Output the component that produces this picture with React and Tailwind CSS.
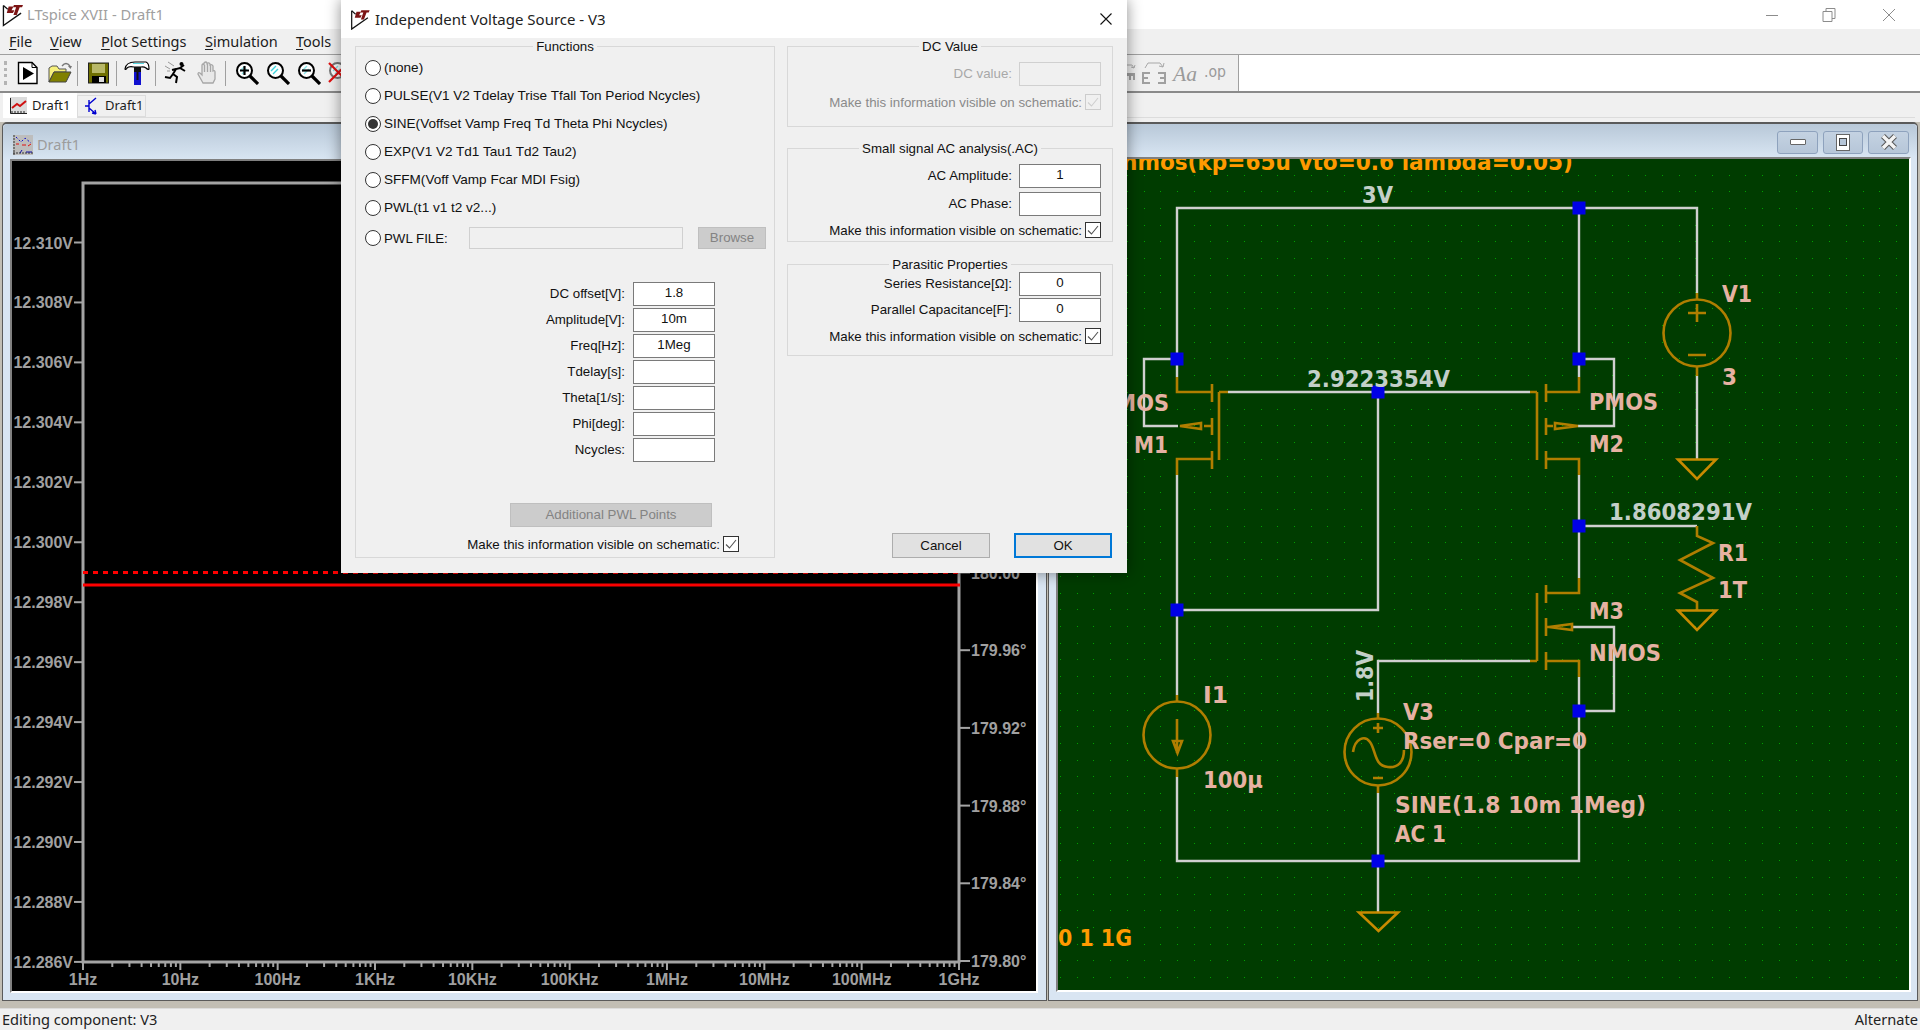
import React from "react";

const WIRE = "#d0d0d0";
const COMP = "#b07e00";
const GND = "#c88a00";
const SALMON = "#e6b2a2";
const GREYT = "#c3cfc8";
const ORANGE = "#ff9a00";

function Logo({ className }) {
  return (
    <svg viewBox="0 0 22 24" className={className}>
      <path d="M1.5 2 V23 L20 10" fill="none" stroke="#111" strokeWidth="1.4" />
      <path d="M1.5 2 L6 6" fill="none" stroke="#111" strokeWidth="1.2" />
      <path d="M7 3 H12 L10 7 H13 L11.5 10 H5 Z" fill="#7c1414" />
      <path d="M12.5 1.5 H22 L21 4 H18.5 L15.5 12 H12 L14.8 4 H11.5 Z" fill="#7c1414" />
    </svg>
  );
}

function NewIcon() {
  return (
    <svg viewBox="0 0 22 24" className="w-[22px] h-[24px]">
      <path d="M1.5 1.5 H15 L20 6.5 V22.5 H1.5 Z" fill="#fff" stroke="#000" strokeWidth="1.4" />
      <path d="M15 1.5 V6.5 H20" fill="none" stroke="#000" />
      <path d="M6 6 L17 12.5 L6 19 Z" fill="#000" />
    </svg>
  );
}
function OpenIcon() {
  return (
    <svg viewBox="0 0 24 24" className="w-[24px] h-[24px]">
      <path d="M14 5 Q18 0 22 5" fill="none" stroke="#777" strokeWidth="1.4" />
      <path d="M20 5 h4 l-1.5 3z" fill="#777" />
      <path d="M1 21 V7 L4 5 H9 L11 8 H18 V11 H6 L1 21 Z" fill="#f6f07c" stroke="#555" strokeWidth="1" />
      <path d="M1 21 L6 11 H23 L18 21 Z" fill="#808000" stroke="#444" strokeWidth="1" />
    </svg>
  );
}
function SaveIcon() {
  return (
    <svg viewBox="0 0 21 22" className="w-[21px] h-[22px]">
      <rect x="0.5" y="1" width="20" height="20" fill="#6f6f00" stroke="#222" />
      <rect x="4" y="2" width="13" height="9" fill="#b8b868" />
      <rect x="4" y="14" width="14" height="7" fill="#000" />
      <rect x="11" y="15" width="5" height="5" fill="#ddd" />
    </svg>
  );
}
function HammerIcon() {
  return (
    <svg viewBox="0 0 26 26" className="w-[26px] h-[26px]">
      <path d="M1 9 Q2 2 11 2 H22 Q25 3 25 9 Q24 10 22 8 Q20 6.5 17 7 H10 Q5 6 3 8 Q2 10 1 9 Z" fill="#fff" stroke="#000" strokeWidth="1.2" />
      <path d="M9 3.5 H20" stroke="#58d8e0" strokeWidth="1" />
      <rect x="10" y="7" width="7" height="5" fill="#111" />
      <rect x="10" y="12" width="7" height="13" fill="#1010d0" />
      <rect x="12.5" y="12" width="2" height="8" fill="#111" />
    </svg>
  );
}
function RunnerIcon() {
  return (
    <svg viewBox="0 0 24 24" className="w-[24px] h-[24px]">
      <circle cx="17.5" cy="3" r="2" fill="#000" />
      <path d="M21 10 L16 7 L12 8 L9 13 L13 16 L12 22 M9 13 L6 17 L1 16 M12 8 L8 9 M16 7 L20 4" fill="none" stroke="#000" strokeWidth="2" />
      <path d="M4 1 L10 5 M1 5 L6 8 M3 10 H6" fill="none" stroke="#999" strokeWidth="1" />
    </svg>
  );
}
function HandIcon() {
  return (
    <svg viewBox="0 0 20 24" className="w-[20px] h-[24px]">
      <path d="M6 22 L1 13 Q1 11 3 12 L5 14 V4 Q6 2 7 4 V2 Q9 0 10 2 V2.5 Q12 1 13 3 V4 Q15 3 16 5 V10 Q18 9 18 11 V18 L16 22 Z M7.5 4 V11 M10.5 3 V11 M13.5 4 V11" fill="#e8e8e8" stroke="#a6a6a6" strokeWidth="1.3" />
    </svg>
  );
}
function Magnifier({ sign, dim }) {
  return (
    <svg viewBox="0 0 24 24" className="w-[24px] h-[24px]">
      <circle cx="9.5" cy="9.5" r="7.5" fill="#fff" stroke={dim ? "#777" : "#000"} strokeWidth="2" />
      <path d="M5 10 L10 5 M7 13 L12 8" stroke="#3cd4dc" strokeWidth="1.4" opacity={sign === "none" ? 1 : 0.6} />
      <path d="M15 15 L23 23" stroke={dim ? "#777" : "#000"} strokeWidth="3.2" />
      {sign === "plus" && <path d="M5 9.5 H14 M9.5 5 V14" stroke="#000" strokeWidth="2.2" />}
      {sign === "minus" && <path d="M5 9.5 H14" stroke="#000" strokeWidth="2.2" />}
      {dim && <path d="M1 2 L20 21 M20 2 L1 21" stroke="#e01010" strokeWidth="2.2" />}
    </svg>
  );
}
function Sep() {
  return <div className="w-px h-[25px] bg-[#a0a0a0]" />;
}
function GreyIcons() {
  return (
    <svg viewBox="0 0 99 24" className="w-[99px] h-[24px]">
      <path d="M0 12 H8 V19 H6 V15 H4 V19 H2 V15 H0 Z" fill="#a0a0a0" />
      <path d="M0 4 H5 L7 7 M7 7 l-3 -1 M7 7 l1 -3" fill="none" stroke="#aaa" />
      <path d="M23 12 H16 V22 H23 M16 17 H21 M31 12 H38 V22 H31 M33 17 H38" fill="none" stroke="#a0a0a0" strokeWidth="2" />
      <path d="M18 7 L21 2 H33 L36 6 M36 6 l-4 -1 M36 6 l1 -4" fill="none" stroke="#a8a8a8" />
      <text x="46" y="20" fontSize="21" fontStyle="italic" fill="#9a9a9a" textLength="24" lengthAdjust="spacingAndGlyphs" fontFamily="'Liberation Serif', serif">Aa</text>
      <text x="77" y="16" fontSize="15" fill="#9a9a9a" textLength="22" lengthAdjust="spacingAndGlyphs" fontFamily="'DejaVu Sans', sans-serif">.op</text>
    </svg>
  );
}

function Toolbar() {
  return (
    <div className="flex h-[39px] shrink-0 border-t border-b-2 border-t-[#a0a0a0] border-b-[#8a8a8a]">
      <div className="w-[1239px] flex items-center bg-[#f0f0f0] border-r border-[#a0a0a0] pl-[4px]">
        <div className="w-[3px] h-[24px] border-l-[3px] border-dotted border-[#b4b4b4]" />
        <div className="ml-[10px]"><NewIcon /></div>
        <div className="ml-[9px]"><OpenIcon /></div>
        <div className="ml-[5px]"><Sep /></div>
        <div className="ml-[10px]"><SaveIcon /></div>
        <div className="ml-[7px]"><Sep /></div>
        <div className="ml-[7px]"><HammerIcon /></div>
        <div className="ml-[5px]"><Sep /></div>
        <div className="ml-[8px]"><RunnerIcon /></div>
        <div className="ml-[9px]"><HandIcon /></div>
        <div className="ml-[8px]"><Sep /></div>
        <div className="ml-[9px]"><Magnifier sign="plus" /></div>
        <div className="ml-[7px]"><Magnifier sign="none" /></div>
        <div className="ml-[7px]"><Magnifier sign="minus" /></div>
        <div className="ml-[7px]"><Magnifier dim /></div>
        <div className="ml-auto flex items-center pr-[12px]">
          <GreyIcons />
        </div>
      </div>
      <div className="flex-1 bg-white" />
    </div>
  );
}

function TitleBar() {
  return (
    <div className="flex items-center h-[29px] shrink-0 bg-white pl-[2px] font-['Noto_Sans',sans-serif] text-[14.7px] text-[#a0a0a0]">
      <Logo className="w-[21px] h-[24px]" />
      <span className="ml-[4px]">LTspice XVII - Draft1</span>
      <div className="ml-auto flex items-center text-[#8c8c8c]">
        <svg viewBox="0 0 150 16" className="w-[150px] h-[16px] mr-[5px]">
          <path d="M1 8.5 H13" stroke="#8c8c8c" strokeWidth="1" />
          <path d="M58 4.5 H67 V14.5 H58 Z M61 4 V1.5 H70 V11.5 H67" fill="none" stroke="#8c8c8c" />
          <path d="M118 2 L130 14 M130 2 L118 14" stroke="#8c8c8c" />
        </svg>
      </div>
    </div>
  );
}

function MenuItem({ first, rest, className }) {
  return (
    <span className={className}>
      <span className="underline underline-offset-2">{first}</span>
      {rest}
    </span>
  );
}

function MenuBar() {
  return (
    <div className="flex items-center h-[25px] shrink-0 bg-[#f0f0f0] pl-[9px] font-['Noto_Sans',sans-serif] text-[14.5px] text-[#1c1c1c]">
      <MenuItem first="F" rest="ile" className="w-[41px]" />
      <MenuItem first="V" rest="iew" className="w-[51px]" />
      <MenuItem first="P" rest="lot Settings" className="w-[104px]" />
      <MenuItem first="S" rest="imulation" className="w-[91px]" />
      <MenuItem first="T" rest="ools" />
    </div>
  );
}

function TraceIcon() {
  return (
    <svg viewBox="0 0 17 17" className="w-[17px] h-[17px]">
      <rect x="0" y="0" width="17" height="17" fill="#dcdcdc" />
      <path d="M0.5 1 V16.5 H17 M2 16 v-2 M5 16 v-2 M8 16 v-2 M11 16 v-2 M14 16 v-2" fill="none" stroke="#222" />
      <path d="M2 11 L7 7 L10 9 L16 4" fill="none" stroke="#d01010" strokeWidth="2" />
    </svg>
  );
}
function TransistorIcon() {
  return (
    <svg viewBox="0 0 12 18" className="w-[12px] h-[18px]">
      <path d="M0 9 H4 M4 3 V15 M4 7 L11 1 M4 11 L11 17 M11 17 L7 16 M11 17 L10 13" fill="none" stroke="#0000d0" strokeWidth="1.4" />
    </svg>
  );
}

function Tabs() {
  return (
    <div className="h-[29px] shrink-0 bg-[#f0f0f0] pl-[3px] pr-[5px] font-['Noto_Sans',sans-serif] text-[13px] text-[#1c1c1c]">
      <div className="flex h-[25px] border-b border-[#dcdcdc]">
        <div className="flex items-center w-[74px] h-[25px] bg-white pl-[7px]">
          <TraceIcon />
          <span className="ml-[5px]">Draft1</span>
        </div>
        <div className="flex items-center w-[69px] h-[22px] mt-[2px] border border-[#dcdcdc] pl-[7px]">
          <TransistorIcon />
          <span className="ml-[8px]">Draft1</span>
        </div>
      </div>
    </div>
  );
}

function PlotIcon() {
  return (
    <svg viewBox="0 0 20 20" className="w-[20px] h-[20px]">
      <rect width="20" height="20" fill="#bdbdbd" />
      <path d="M1 0 V20 M0 18 H20" stroke="#333" strokeDasharray="2 1" />
      <path d="M3 2 L8 7 L12 3 L18 8" fill="none" stroke="#1010d0" strokeDasharray="2 2" />
      <path d="M3 9 H6 M9 10 H13 M15 11 L18 9" fill="none" stroke="#e01010" />
      <path d="M7 18 L9 15 M13 17 H19" fill="none" stroke="#1010a0" />
    </svg>
  );
}

function Plot() {
  const left = [12.31, 12.308, 12.306, 12.304, 12.302, 12.3, 12.298, 12.296, 12.294, 12.292, 12.29, 12.288, 12.286];
  const right = ["180.00°", "179.96°", "179.92°", "179.88°", "179.84°", "179.80°"];
  const bottom = ["1Hz", "10Hz", "100Hz", "1KHz", "10KHz", "100KHz", "1MHz", "10MHz", "100MHz", "1GHz"];
  const dx = (959 - 83) / 9;
  const minor = [];
  for (let d = 0; d < 9; d++) {
    for (let k = 2; k < 10; k++) {
      minor.push(83 + dx * (d + Math.log10(k)));
    }
  }
  return (
    <svg viewBox="12 161 1024 830" className="block w-[1024px] h-[830px] bg-black font-['Liberation_Sans',sans-serif]">
      <path d="M83 962 V183 H959 V962 Z" fill="none" stroke="#a4a4a4" strokeWidth="3" />
      <path d="M83 572.5 H960" stroke="#ff0000" strokeWidth="3" strokeDasharray="5 5" />
      <path d="M83 585 H960" stroke="#ff0000" strokeWidth="3" />
      {left.map((v, i) => {
        const y = 242.5 + i * 59.95;
        return (
          <g key={v}>
            <path d={`M74 ${y} H83`} stroke="#a4a4a4" strokeWidth="2" />
            <text x="73" y={y + 6} textAnchor="end" fontSize="16" fontWeight="700" fill="#a0a0a0">{v.toFixed(3)}V</text>
          </g>
        );
      })}
      {right.map((v, i) => {
        const y = 572.5 + i * 77.7;
        return (
          <g key={v}>
            <path d={`M959 ${y} H970`} stroke="#a4a4a4" strokeWidth="2" />
            <text x="971" y={y + 6} fontSize="16" fontWeight="700" fill="#a0a0a0">{v}</text>
          </g>
        );
      })}
      {bottom.map((v, i) => {
        const x = 83 + i * dx;
        return (
          <g key={v}>
            <path d={`M${x} 962 V970`} stroke="#a4a4a4" strokeWidth="2" />
            <text x={x} y="985" textAnchor="middle" fontSize="16" fontWeight="700" fill="#a0a0a0">{v}</text>
          </g>
        );
      })}
      {minor.map((x, i) => (
        <path key={i} d={`M${x} 962 V967`} stroke="#a4a4a4" strokeWidth="2" />
      ))}
    </svg>
  );
}

function Junction({ x, y }) {
  return <rect x={x - 6.5} y={y - 6.5} width="13" height="13" fill="#0000e6" />;
}

function T({ x, y, w, c = SALMON, children, transform }) {
  return (
    <text x={x} y={y} textLength={w} lengthAdjust="spacingAndGlyphs" fill={c} fontSize="23" fontWeight="700" transform={transform}>
      {children}
    </text>
  );
}

function Schematic() {
  let dots = "";
  for (let i = -8; i < 45; i++) {
    for (let j = -3; j < 48; j++) {
      const x = Math.round(1177 + i * 16.72);
      const y = Math.round(208 + j * 16.72);
      dots += `M${x} ${y}h1v1h-1z`;
    }
  }
  const wires = [
    "M1177 377 V208 H1697 V293",
    "M1697 376 V459",
    "M1177 359 H1144 V426 H1178",
    "M1228 392 H1530",
    "M1378 392 V610 H1177",
    "M1177 475 V695",
    "M1177 777 V861 H1579 V677",
    "M1579 208 V377",
    "M1579 359 H1614 V426 H1578",
    "M1579 475 V578",
    "M1579 526 H1697",
    "M1573 627 H1614 V711 H1579",
    "M1530 661 H1378 V713",
    "M1378 793 V912",
  ];
  const comp = [
    "M1177 377 V392 H1212 M1212 384 V402 M1212 418 V435 M1212 426 H1204 M1212 451 V469 M1212 459 H1177 V475 M1219 392 V460 M1219 392 H1228",
    "M1180 426 L1201 423 V429 Z",
    "M1579 377 V392 H1546 M1546 384 V402 M1546 418 V435 M1546 426 H1553 M1546 451 V469 M1546 459 H1579 V475 M1537 392 V460 M1537 392 H1530",
    "M1578 426 L1555 423 V429 Z",
    "M1579 578 V593 H1546 M1546 585 V603 M1546 618 V636 M1546 627 H1549 M1546 652 V670 M1546 661 H1579 V677 M1537 593 V661 M1537 661 H1530",
    "M1549 627 L1572 624 V630 Z",
    "M1697 526 V536 L1713 543 L1680 560 L1713 578 L1680 593 L1697 602 V610",
    "M1697 293 V299 M1697 367 V376 M1688 313 H1706 M1697 304 V322 M1688 355 H1706",
    "M1177 695 V701 M1177 769 V777 M1177 719 V753",
    "M1173 741 H1182 L1177.5 753 Z",
    "M1378 713 V719 M1378 786 V793 M1373 728 H1383 M1378 723 V733 M1373 778 H1383",
    "M1353 752 C1355 738 1365 735 1370 742 C1376 750 1374 766 1388 767 C1398 768 1404 762 1404 750",
  ];
  return (
    <svg viewBox="1058 159 851 831" className="block w-[851px] h-[831px] bg-[#003c00] font-['DejaVu_Sans',sans-serif]">
      <path d={dots} fill="#00a000" />
      <path d={wires.join(" ")} fill="none" stroke={WIRE} strokeWidth="2.4" />
      <path d={comp.join(" ")} fill="none" stroke={COMP} strokeWidth="2.6" />
      <circle cx="1697" cy="333" r="33.5" fill="none" stroke={COMP} strokeWidth="2.6" />
      <circle cx="1177" cy="735" r="33.5" fill="none" stroke={COMP} strokeWidth="2.6" />
      <circle cx="1378" cy="752" r="33.5" fill="none" stroke={COMP} strokeWidth="2.6" />
      <path d="M1678 459.5 H1716 L1697 479 Z M1678 610.5 H1716 L1697 630 Z M1359 912.5 H1398 L1378.5 931 Z" fill="none" stroke={GND} strokeWidth="2.6" />
      <Junction x={1579} y={208} />
      <Junction x={1177} y={359} />
      <Junction x={1579} y={359} />
      <Junction x={1378} y={392} />
      <Junction x={1579} y={526} />
      <Junction x={1177} y={610} />
      <Junction x={1579} y={711} />
      <Junction x={1378} y={861} />
      <T x={1122} y={170} w={451} c={ORANGE}>nmos(kp=65u vto=0.6 lambda=0.05)</T>
      <T x={1362} y={203} w={31} c={GREYT}>3V</T>
      <T x={1307} y={387} w={143} c={GREYT}>2.9223354V</T>
      <T x={1100} y={411} w={69}>PMOS</T>
      <T x={1134} y={453} w={34}>M1</T>
      <T x={1589} y={410} w={69}>PMOS</T>
      <T x={1589} y={452} w={35}>M2</T>
      <T x={1589} y={619} w={35}>M3</T>
      <T x={1589} y={661} w={72}>NMOS</T>
      <T x={1722} y={302} w={30}>V1</T>
      <T x={1722} y={385} w={15}>3</T>
      <T x={1609} y={520} w={143} c={GREYT}>1.8608291V</T>
      <T x={1718} y={561} w={30}>R1</T>
      <T x={1718} y={598} w={29}>1T</T>
      <T x={1203} y={703} w={25}>I1</T>
      <T x={1203} y={788} w={60}>100µ</T>
      <T x={1373} y={702} w={52} c={GREYT} transform="rotate(-90 1373 702)">1.8V</T>
      <T x={1403} y={720} w={31}>V3</T>
      <T x={1403} y={749} w={184}>Rser=0 Cpar=0</T>
      <T x={1395} y={813} w={251}>SINE(1.8 10m 1Meg)</T>
      <T x={1395} y={842} w={51}>AC 1</T>
      <T x={1058} y={946} w={74} c={ORANGE}>0 1 1G</T>
    </svg>
  );
}

function WinButtons() {
  const cls = "flex items-center justify-center h-[23px] rounded-[3px] border border-[#8ea2bd] bg-gradient-to-b from-[#c4d2e2] to-[#b6c6d8]";
  return (
    <div className="flex gap-[5px]">
      <div className={`${cls} w-[41px]`}><div className="w-[16px] h-[6px] rounded-[1px] bg-white border border-[#666]" /></div>
      <div className={`${cls} w-[40px]`}><div className="w-[14px] h-[17px] bg-white border border-[#666] flex items-center justify-center"><div className="w-[8px] h-[8px] bg-[#b6c6d8] border border-[#444]" /></div></div>
      <div className={`${cls} w-[41px]`}>
        <svg viewBox="0 0 18 18" className="w-[18px] h-[18px]"><path d="M3 3 L15 15 M15 3 L3 15" stroke="#555" strokeWidth="5.5" /><path d="M3 3 L15 15 M15 3 L3 15" stroke="#f4f4f4" strokeWidth="3.5" /></svg>
      </div>
    </div>
  );
}

function Mdi() {
  return (
    <div className="flex h-[886px] shrink-0 bg-[#c2beb4] pl-[2px] pr-[2px]">
      <div className="w-[1045px] h-[879px] flex flex-col border border-t-2 border-[#5a5a5a] rounded-t-[5px] bg-[#d9e5f2]">
        <div className="flex items-center h-[35px] shrink-0 pl-[10px] pt-[6px] rounded-t-[5px] bg-gradient-to-b from-[#b8c8d8] to-[#d8e5f2] font-['Noto_Sans',sans-serif] text-[14.5px] text-[#9c9c9c]">
          <PlotIcon />
          <span className="ml-[4px]">Draft1</span>
        </div>
        <div className="ml-[7px] w-[1028px] border-2 border-t-[#808080] border-l-[#808080] border-r-white border-b-white">
          <Plot />
        </div>
      </div>
      <div className="w-[870px] h-[879px] ml-px flex flex-col border border-t-2 border-[#5a5a5a] rounded-t-[5px] bg-[#d9e5f2]">
        <div className="flex items-center justify-end h-[33px] shrink-0 pr-[8px] pt-[3px] rounded-t-[5px] bg-gradient-to-b from-[#b8c8d8] to-[#d8e5f2]">
          <WinButtons />
        </div>
        <div className="ml-[7px] w-[855px] border-2 border-t-[#808080] border-l-[#808080] border-r-white border-b-white">
          <Schematic />
        </div>
      </div>
    </div>
  );
}

function Group({ title, className, children }) {
  return (
    <div className={`relative border border-[#d8d8d8] ${className}`}>
      <div className="absolute left-0 right-0 top-[-8px] flex justify-center">
        <span className="bg-[#f0f0f0] px-[3px] leading-[16px] text-[#111]">{title}</span>
      </div>
      {children}
    </div>
  );
}

function Radio({ label, checked }) {
  return (
    <div className="flex items-center h-[28px] pl-[9px] gap-[3px] text-[13.55px]">
      <RadioDot checked={checked} />
      <span className="pt-px">{label}</span>
    </div>
  );
}
function RadioDot({ checked }) {
  return (
    <span className="flex items-center justify-center w-[16px] h-[16px] rounded-full border border-[#333] bg-white shrink-0">
      {checked && <span className="w-[10px] h-[10px] rounded-full bg-[#333]" />}
    </span>
  );
}

function Box({ value, dim, className = "" }) {
  return (
    <div className={`w-[82px] h-[24px] shrink-0 flex items-center justify-center pb-[2px] border ${dim ? "border-[#d0d0d0] bg-[#f0f0f0]" : "border-[#7a7a7a] bg-white"} ${className}`}>
      {value}
    </div>
  );
}

function Check({ dim }) {
  return (
    <span className={`flex items-center justify-center w-[16px] h-[16px] border shrink-0 ${dim ? "border-[#cccccc]" : "border-[#333] bg-white"}`}>
      <svg viewBox="0 0 12 12" className="w-[12px] h-[12px]"><path d="M1 6.5 L4.5 10 L11 2" fill="none" stroke={dim ? "#cfcfcf" : "#555"} strokeWidth="1.1" /></svg>
    </span>
  );
}

function ParamRow({ label, value }) {
  return (
    <div className="flex items-center justify-end gap-[8px] pr-[59px] mb-[2px]">
      <span>{label}</span>
      <Box value={value} />
    </div>
  );
}

function FieldRow({ label, value, dim }) {
  return (
    <div className="flex items-center justify-end gap-[7px] pr-[11px]">
      <span className={dim ? "text-[#a8a8a8]" : ""}>{label}</span>
      <Box value={value} dim={dim} />
    </div>
  );
}

function VisibleRow({ dim, className = "" }) {
  return (
    <div className={`flex items-center justify-end h-[16px] gap-[3px] ${className}`}>
      <span className={`pt-px ${dim ? "text-[#8a8a8a]" : ""}`}>Make this information visible on schematic:</span>
      <Check dim={dim} />
    </div>
  );
}

function Dialog() {
  return (
    <div className="absolute left-[341px] top-0 w-[786px] h-[573px] flex flex-col bg-[#f0f0f0] shadow-[0_0_14px_rgba(0,0,0,0.45)] font-['Liberation_Sans',sans-serif] text-[13.3px] text-[#111]">
      <div className="flex items-center h-[38px] shrink-0 bg-white pl-[9px] font-['Noto_Sans',sans-serif] text-[15px] text-[#222]">
        <Logo className="w-[20px] h-[21px]" />
        <span className="ml-[5px]">Independent Voltage Source - V3</span>
        <svg viewBox="0 0 12 12" className="ml-auto mr-[15px] w-[12px] h-[12px]"><path d="M0.5 0.5 L11.5 11.5 M11.5 0.5 L0.5 11.5" stroke="#111" strokeWidth="1.1" /></svg>
      </div>
      <div className="flex pl-[14px] pr-[14px] pt-[8px] gap-[12px] h-[520px]">
        <Group title="Functions" className="w-[420px] h-[512px] pt-[7px]">
          <Radio label="(none)" />
          <Radio label="PULSE(V1 V2 Tdelay Trise Tfall Ton Period Ncycles)" />
          <Radio label="SINE(Voffset Vamp Freq Td Theta Phi Ncycles)" checked />
          <Radio label="EXP(V1 V2 Td1 Tau1 Td2 Tau2)" />
          <Radio label="SFFM(Voff Vamp Fcar MDI Fsig)" />
          <Radio label="PWL(t1 v1 t2 v2...)" />
          <div className="flex items-center h-[22px] mt-[5px] pl-[9px] gap-[3px]">
            <RadioDot />
            <span className="w-[82px] pt-px">PWL FILE:</span>
            <div className="w-[214px] h-[22px] border border-[#d0d0d0]" />
            <div className="ml-[12px] w-[68px] h-[22px] flex items-center justify-center bg-[#cccccc] border border-[#bfbfbf] text-[#838383]">Browse</div>
          </div>
          <div className="mt-[33px]">
            <ParamRow label="DC offset[V]:" value="1.8" />
            <ParamRow label="Amplitude[V]:" value="10m" />
            <ParamRow label="Freq[Hz]:" value="1Meg" />
            <ParamRow label="Tdelay[s]:" />
            <ParamRow label="Theta[1/s]:" />
            <ParamRow label="Phi[deg]:" />
            <ParamRow label="Ncycles:" />
          </div>
          <div className="mt-[41px] ml-[154px] w-[202px] h-[24px] flex items-center justify-center bg-[#cccccc] border border-[#bfbfbf] text-[#838383]">Additional PWL Points</div>
          <VisibleRow className="mt-[9px] pr-[35px]" />
        </Group>
        <div className="w-[326px] flex flex-col">
          <Group title="DC Value" className="h-[81px] pt-[15px]">
            <FieldRow label="DC value:" dim />
            <VisibleRow dim className="mt-[8px] pr-[11px]" />
          </Group>
          <Group title="Small signal AC analysis(.AC)" className="mt-[21px] h-[94px] pt-[15px]">
            <FieldRow label="AC Amplitude:" value="1" />
            <div className="mt-[4px]"><FieldRow label="AC Phase:" /></div>
            <VisibleRow className="mt-[6px] pr-[11px]" />
          </Group>
          <Group title="Parasitic Properties" className="mt-[22px] h-[92px] pt-[7px]">
            <FieldRow label="Series Resistance[Ω]:" value="0" />
            <div className="mt-[2px]"><FieldRow label="Parallel Capacitance[F]:" value="0" /></div>
            <VisibleRow className="mt-[6px] pr-[11px]" />
          </Group>
          <div className="flex justify-end gap-[24px] mt-[177px] pr-px">
            <div className="w-[98px] h-[25px] flex items-center justify-center bg-[#e1e1e1] border border-[#adadad]">Cancel</div>
            <div className="w-[98px] h-[25px] flex items-center justify-center bg-[#e1e1e1] border-2 border-[#0078d7]">OK</div>
          </div>
        </div>
      </div>
    </div>
  );
}

function StatusBar() {
  return (
    <div className="flex items-center justify-between h-[22px] shrink-0 pt-[1px] border-t border-[#dcdcdc] bg-[#f0f0f0] px-[2px] font-['Noto_Sans',sans-serif] text-[14.6px] text-[#222]">
      <span>Editing component: V3</span>
      <span>Alternate</span>
    </div>
  );
}

export default function App() {
  return (
    <div className="relative w-[1920px] h-[1030px] overflow-hidden flex flex-col bg-[#f0f0f0]">
      <TitleBar />
      <MenuBar />
      <Toolbar />
      <Tabs />
      <Mdi />
      <StatusBar />
      <Dialog />
    </div>
  );
}
